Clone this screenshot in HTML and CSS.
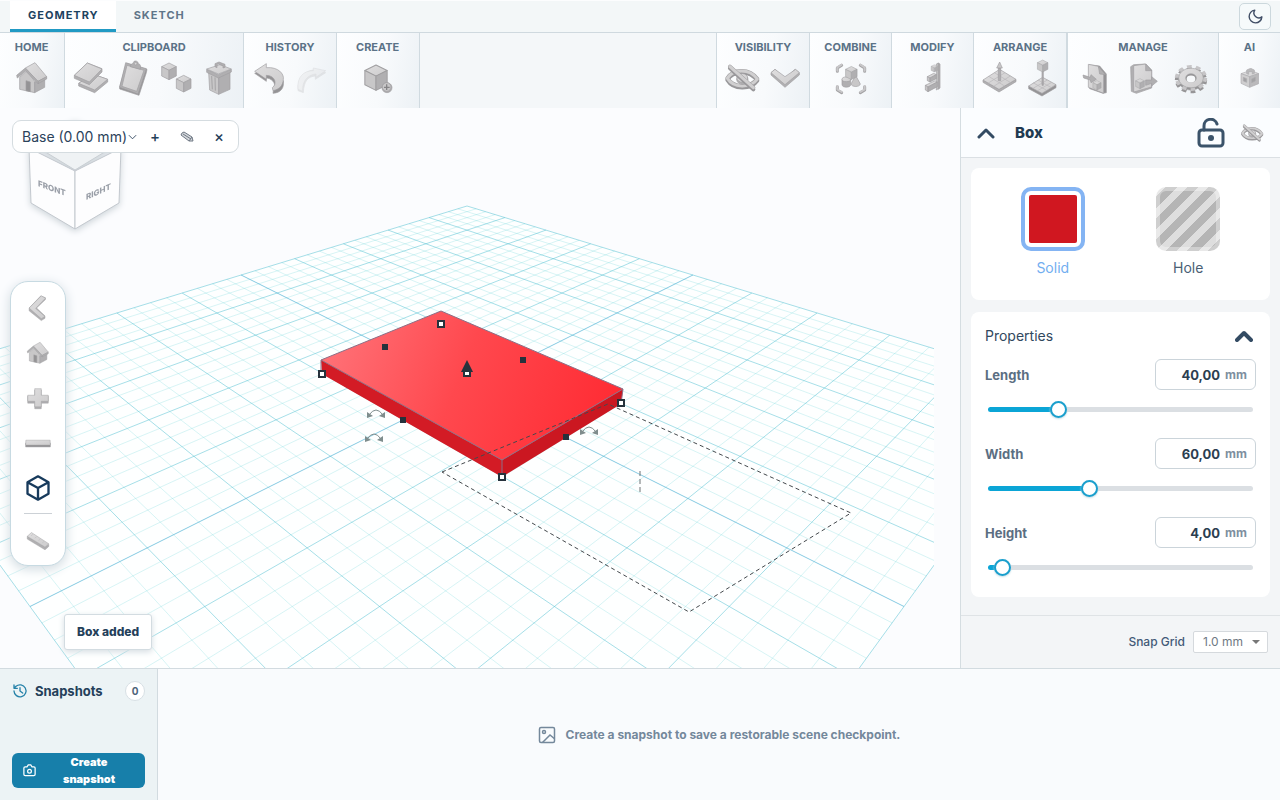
FILE: index.html
```html
<!DOCTYPE html>
<html lang="en">
<head>
<meta charset="utf-8">
<meta name="viewport" content="width=device-width, initial-scale=1">
<title>Geometry editor</title>
<link rel="stylesheet" href="styles.css">
</head>
<body>
<svg class="defs" aria-hidden="true">
  <defs>
    <linearGradient id="lit" x1="0" y1="0" x2="1" y2="1"><stop offset="0" stop-color="#dfdedf"/><stop offset="1" stop-color="#cdcccd"/></linearGradient>
    <linearGradient id="boxTop" x1="0" y1="0.4" x2="1" y2="0.6"><stop offset="0" stop-color="#ff7076"/><stop offset="0.45" stop-color="#ff484e"/><stop offset="1" stop-color="#ff2b33"/></linearGradient>
    <symbol id="cube" viewBox="-25 -28 50 56" overflow="visible">
      <path class="f1" d="M0-25 22-14 0-3-22-14Z"/><path class="f2" d="M-22-14 0-3V25L-22 14Z"/><path class="f3" d="M22-14 0-3V25L22 14Z"/>
    </symbol>
    <symbol id="house" viewBox="-60 -60 120 120">
      <path class="f2" d="M-37-2V34L8 44V10L-15-22Z"/><path class="f3" d="M8 44 38 28V0L8 12Z"/><path class="f4" d="M-18 8-5 12V41L-18 38Z"/>
      <path class="f1" d="M-20-30 9-46 44-4 18 10Z"/><path class="f3" d="M18 10 44-4V3L18 17Z"/><path class="f3" d="M-20-30-46-8-44 0-19-21 18 17V10Z"/>
    </symbol>
    <symbol id="eyeoff" viewBox="-60 -60 120 120">
      <path class="tube3" d="M-44 6C-28-22 22-26 46 8 26 36-26 36-44 6Z"/><path class="tube1" d="M-44 1C-28-27 22-31 46 3 26 31-26 31-44 1Z"/><path class="tube2" d="M-44 1C-28-27 22-31 46 3 26 31-26 31-44 1Z"/>
      <ellipse class="f3" cx="1" cy="4" rx="17" ry="15"/><ellipse class="f1" cx="1" cy="0" rx="16" ry="13"/>
      <path class="tube3" d="M-36-29 34 34"/><path class="tube1" d="M-36-34 34 29"/><path class="tube2" d="M-36-34 34 29"/>
    </symbol>
  </defs>
</svg>

<header class="tabs">
  <nav class="tablist" aria-label="Workspace">
    <button class="tab tab-active">GEOMETRY</button>
    <button class="tab">SKETCH</button>
  </nav>
  <button class="theme" aria-label="Dark mode"><svg viewBox="0 0 24 24" class="moon"><path d="M11 3a7 7 0 0 0 10 9.5A9 9 0 1 1 11 3Z"/></svg></button>
</header>

<div class="ribbon">
  <section class="group g-home"><h2>HOME</h2><div class="tools">
    <button aria-label="Home"><svg><use href="#house"/></svg></button></div></section>
  <section class="group"><h2>CLIPBOARD</h2><div class="tools">
    <button aria-label="Copy"><svg viewBox="-60 -60 120 120">
      <path class="f3" d="M8-12 53 4V12L14 44-34 24V16Z"/><path class="f1" d="M8-12 53 4 14 36-34 16Z"/>
      <path class="f3" d="M-8-45 36-28V-18L-2 20-47 1V-8Z"/><path class="f1" d="M-8-45 36-27-2 12-47-8Z"/></svg></button>
    <button aria-label="Paste"><svg viewBox="-60 -60 120 120">
      <path class="f4" d="M-20-44 42-26 40-16 18 52-40 33V26Z"/><path class="f3" d="M-22-46 40-28 15 48-40 28Z"/><path class="f1" d="M-18-38 33-23 11 40-33 25Z"/>
      <path class="f3" d="M-8-34C-8-42-2-42 1-46 2-54 16-52 16-43 22-42 24-36 22-26Z"/><circle class="f1" cx="8" cy="-43" r="4"/></svg></button>
    <button aria-label="Duplicate"><svg viewBox="-60 -60 120 120"><use href="#cube" x="-46" y="-48" width="50" height="56"/><use href="#cube" x="-2" y="-11" width="50" height="56"/></svg></button>
    <button aria-label="Delete"><svg viewBox="-60 -60 120 120">
      <path class="f2" d="M-31-16-1-4V49L-28 36Z"/><path class="f3" d="M33-18-1-4V49L33 34Z"/>
      <path class="groove" d="M-22-6-20 34M-12-2-11 38"/>
      <path class="f3" d="M-37-26-2-10 37-26V-18L-2 0-37-17Z"/><path class="f1" d="M3-40 37-27-2-12-37-27Z"/>
      <path class="f3" d="M-12-34V-43L0-48 18-41V-32L12-30V-37L-3-42-6-40V-31Z"/></svg></button></div></section>
  <section class="group"><h2>HISTORY</h2><div class="tools">
    <button aria-label="Undo"><svg viewBox="-60 -60 120 120">
      <path class="f4" d="M-43-14-8 10V0C4 0 24 14 14 30L12 46C36 44 46 30 43 8L-8-26Z"/><path class="f1" d="M-43-20-8-43V-31C28-34 46-12 43 4 42 22 32 34 12 38L10 29C26 18 18-8-8-8V4Z"/></svg></button>
    <button aria-label="Redo" disabled><svg viewBox="-60 -60 120 120">
      <path class="f3" d="M41-16 10 4V-6C-12-4-24 8-26 44L-42 38C-44 0-24-18 2-24Z"/><path class="f1" d="M41-22 4-30V-22C-24-22-46-4-42 34L-28 40C-30 6-10-10 12-12V-2Z"/></svg></button></div></section>
  <section class="group g-create"><h2>CREATE</h2><div class="tools">
    <button aria-label="Create shape"><svg viewBox="-60 -60 120 120"><use href="#cube" x="-44" y="-44" width="76" height="86"/>
      <circle class="f3" cx="27" cy="29" r="15"/><circle class="f2" cx="26" cy="27" r="13"/><path class="mark" d="M18 28H35M26 19V36"/></svg></button></div></section>
  <div class="spacer"></div>
  <section class="group g-line"><h2>VISIBILITY</h2><div class="tools">
    <button aria-label="Toggle visibility"><svg><use href="#eyeoff"/></svg></button>
    <button aria-label="More visibility"><svg viewBox="-60 -60 120 120"><path class="f3" d="M-42-16-30-26 0 2 30-26 43-16V-9L0 28-42-9Z"/><path class="f1" d="M-42-16-30-26 0-4 32-26 43-16 0 20Z"/></svg></button></div></section>
  <section class="group g-mid"><h2>COMBINE</h2><div class="tools">
    <button aria-label="Combine"><svg viewBox="-60 -60 120 120">
      <path class="bar3" d="M-41-20V-30L-28-38M41-20V-30L28-38M-41 26V36L-28 44M41 26V36L28 44"/><path class="bar1" d="M-41-22V-32L-28-40M41-22V-32L28-40M-41 24V34L-28 42M41 24V34L28 42"/>
      <path class="f3" d="M-27 4V20C-27 30-1 30-1 20V4Z"/><ellipse class="f1" cx="-14" cy="4" rx="13" ry="7"/><path class="f2" d="M14-8 28 18C26 28 2 28 0 18Z"/>
      <use href="#cube" x="-19" y="-37" width="40" height="44"/></svg></button></div></section>
  <section class="group g-mid"><h2>MODIFY</h2><div class="tools">
    <button aria-label="Align"><svg viewBox="-60 -60 120 120">
      <path class="f2" d="M10-42 16-45V32L10 36Z"/><path class="f3" d="M16-45 21-42V30L16 34Z"/>
      <use href="#cube" x="-7" y="-42" width="22" height="26"/><path class="f1" d="M-17-4 2-14 10-10-9 0Z"/><path class="f2" d="M-17-4-9 0V12L-17 8Z"/><path class="f3" d="M-9 0 10-10V2L-9 12Z"/>
      <path class="f1" d="M-23 22 6 8 13 12-15 27Z"/><path class="f2" d="M-23 22-15 27V41L-23 36Z"/><path class="f3" d="M-15 27 13 12V26L-15 41Z"/></svg></button></div></section>
  <section class="group"><h2>ARRANGE</h2><div class="tools">
    <button aria-label="Place on plane"><svg viewBox="-60 -60 120 120">
      <path class="f3" d="M-48 6 0 34 51 4V11L0 42-48 13Z"/><path class="f1" d="M2-26 51 4 0 34-48 6Z"/><path class="net" d="M-14-16 35 14M-31-5 17 24M18-16-32 15M34-6-16 25"/>
      <path class="f3" d="M-2 8V-30H5V8Z"/><path class="f2" d="M2-48 10-30H-7Z"/></svg></button>
    <button aria-label="Lift"><svg viewBox="-60 -60 120 120">
      <path class="f4" d="M-40 24 0 46 42 20V29L0 54-40 32Z"/><path class="f1" d="M2-2 42 20 0 46-40 24Z"/><path class="net" d="M-12 6 28 29M-27 14 14 37M16 6-27 31M29 13-13 38"/>
      <path class="f3" d="M0 22V-20H4V22Z"/><use href="#cube" x="-16" y="-56" width="36" height="40"/></svg></button></div></section>
  <section class="group g-manage g-line"><h2>MANAGE</h2><div class="tools">
    <button aria-label="Import"><svg viewBox="-60 -60 120 120">
      <path class="f4" d="M-18-40 14-36 34-12V44L24 46-16 32Z"/><path class="f1" d="M-20-41 10-35 26-10V46L-20 28Z"/><path class="f3" d="M10-35 14-12 32-10Z"/>
      <path class="f3" d="M-36-9-14-2-12-10 4 4-12 14-14 6-34 0Z"/><use href="#cube" x="-8" y="5" width="28" height="34"/></svg></button>
    <button aria-label="Export"><svg viewBox="-60 -60 120 120">
      <path class="f3" d="M-37-34-28-40 8-42 26-24V30L-20 46-35 40Z"/><path class="f1" d="M-28-37 8-42 26-22V27L-28 42Z"/><path class="f3" d="M8-42V-22L26-22Z"/>
      <use href="#cube" x="-24" y="0" width="30" height="34"/><path class="f3" d="M8 6 26 6V-4L43 10 26 24V16L8 22Z"/></svg></button>
    <button aria-label="Settings"><svg viewBox="-60 -60 120 120">
      <g transform="translate(0 7) scale(1 .8)"><circle class="teeth3" r="42"/><circle class="f4" r="37"/></g>
      <g transform="scale(1 .8)"><circle class="teeth1" r="42"/><circle class="f1" r="37"/><circle class="f4" r="16"/><circle class="hole" cy="4" r="13"/></g></svg></button></div></section>
  <section class="group g-ai"><h2>AI</h2><div class="tools">
    <button aria-label="Assistant"><svg viewBox="-60 -60 120 120">
      <path class="f1" d="M-27-13 2-23 26-13-1-4Z"/><path class="f2" d="M-27-13-1-4V28L-27 16Z"/><path class="f3" d="M26-13-1-4V28L26 17Z"/>
      <path class="f4" d="M-20-2-10 2V13L-20 9ZM5 3 16-2V9L5 14Z"/><path class="f3" d="M-10-13V-24L2-29 13-24V-14L7-12V-19L-4-19V-11Z"/></svg></button></div></section>
</div>

<main class="work">
  <div class="viewport">
    <svg id="scene" class="scene" viewBox="0 108 934 560" preserveAspectRatio="xMidYMid slice" role="img" aria-label="Work plane with a red box">
      <g id="grid"></g>
      <path fill="url(#boxTop)" d="M321 360 441 311 623 389 502 460Z"/>
      <path fill="#d31b25" d="M321 360 502 460V477L322 374Z"/><path fill="#cb1721" d="M502 460 623 389 621 404 502 477Z"/>
      <path class="edge" d="M321 374V360L441 311 623 389 621 404M321 360 502 460 623 389M502 460V476"/>
      <path class="ghost" d="M442 472 608 404 851 513 689 612Z"/><path class="ghost-mid" d="M640 471V493"/>
      <g class="solid"><path d="M382 344h6v6h-6zM520 357h6v6h-6zM400 417h6v6h-6zM563 434h6v6h-6z"/><path d="M467 360 473 372H461Z"/></g>
      <g class="handle"><path d="M438 321h6v6h-6zM319 371h6v6h-6zM618 400h6v6h-6zM499 474h6v6h-6zM464 371h6v5h-6z"/></g>
      <g class="spin"><path d="M369 415Q376 405 383 415M367 439Q374 429 381 439M582 432Q589 422 596 432"/></g>
      <g class="spin-tip"><path d="M367 412 373 416 367 418ZM385 412 379 416 385 418ZM365 436 371 440 365 442ZM383 436 377 440 383 442ZM580 429 586 433 580 435ZM598 429 592 433 598 435Z"/></g>
    </svg>

    <svg class="viewcube" viewBox="0 0 110 110" role="img" aria-label="View cube">
      <path class="vc-top" d="M8 22 54 0 100 22 54 50Z"/><path class="vc-side" d="M8 28 54 51V109L10 83Z"/><path class="vc-side" d="M100 28 54 51V109L98 83Z"/>
      <text transform="translate(17 66) skewY(20)">FRONT</text><text transform="translate(65 80) skewY(-24)">RIGHT</text>
    </svg>

    <div class="plane-bar">
      <div class="plane-pick"><select aria-label="Work plane"><option>Base (0.00 mm)</option></select>
      <svg viewBox="0 0 10 6"><path d="M1 1 5 5 9 1"/></svg></div>
      <button aria-label="Add plane">+</button>
      <button aria-label="Edit plane"><svg viewBox="0 0 14 12" class="pencil"><path d="M2 2 4 1 12 6 13 10 9 10 1 4Z"/><path d="M3 3 11 8M9 10 12 6"/></svg></button>
      <button aria-label="Remove plane">×</button>
    </div>

    <div class="rail">
      <button aria-label="Collapse"><svg viewBox="-60 -60 120 120"><path class="f3" d="M-38 0 12-52 32-44V-36L-6 0 30 34V44L14 54-38 12Z"/><path class="f1" d="M-38 0 14-52 32-42-10 2 30 36 14 46Z"/></svg></button>
      <button aria-label="Home view"><svg><use href="#house"/></svg></button>
      <button aria-label="Zoom in"><svg viewBox="-60 -60 120 120"><path class="f3" d="M-14-34H14V-8H44V22H14V46H-14V22H-44V-8H-14Z"/><path class="f1" d="M-14-40H14V-12H44V14H14V38H-14V14H-44V-12H-14Z"/></svg></button>
      <button aria-label="Zoom out"><svg viewBox="-60 -60 120 120"><path class="f4" d="M-53 0H53V17H-53Z"/><path class="f1" d="M-52-12H52L53 9H-53Z"/></svg></button>
      <button aria-label="Perspective"><svg viewBox="0 0 24 24" class="line-cube"><path d="M12 2 21 7V17L12 22 3 17V7ZM3 7 12 12 21 7M12 12V22"/></svg></button>
      <hr>
      <button aria-label="Measure"><svg viewBox="-60 -60 120 120"><path class="f3" d="M-46-16V-4L30 42 46 28V18L30 30Z"/><path class="f1" d="M-46-16-28-32 46 16 30 30Z"/><path class="net" d="M-30-18-22-24M-14-8-6-14M2 2 10-4M18 13 26 6"/></svg></button>
    </div>

    <div class="toast" role="status">Box added</div>
  </div>

  <aside class="panel">
    <div class="panel-head">
      <button aria-label="Collapse panel"><svg viewBox="0 0 18 12" class="chev"><path d="M2 10 9 3 16 10"/></svg></button>
      <h1>Box</h1>
      <button aria-label="Lock" class="lock"><svg viewBox="0 0 28 30"><rect x="2" y="12" width="24" height="16" rx="3"/><path d="M7 12V8C7 0 18-1 20 6"/><circle cx="14" cy="20" r="3"/></svg></button>
      <button aria-label="Hide" class="hide"><svg><use href="#eyeoff"/></svg></button>
    </div>
    <div class="panel-body">
      <div class="card kinds">
        <button class="kind kind-on"><span class="swatch solid-swatch"></span>Solid</button>
        <button class="kind"><span class="swatch hole-swatch"></span>Hole</button>
      </div>
      <div class="card props">
        <button class="props-head">Properties<svg viewBox="0 0 18 12" class="chev"><path d="M2 10 9 3 16 10"/></svg></button>
        <div class="prop">
          <label for="len">Length</label><span class="num"><input id="len" type="text" value="40,00"><span>mm</span></span>
          <input class="range" type="range" min="0" max="160" value="40" aria-label="Length slider" style="--fill:25%">
        </div>
        <div class="prop">
          <label for="wid">Width</label><span class="num"><input id="wid" type="text" value="60,00"><span>mm</span></span>
          <input class="range" type="range" min="0" max="160" value="60" aria-label="Width slider" style="--fill:37%">
        </div>
        <div class="prop">
          <label for="hei">Height</label><span class="num"><input id="hei" type="text" value="4,00"><span>mm</span></span>
          <input class="range" type="range" min="0" max="160" value="4" aria-label="Height slider" style="--fill:4%">
        </div>
      </div>
    </div>
    <div class="panel-foot">
      <label for="snap">Snap Grid</label>
      <div class="snap"><select id="snap"><option>1.0 mm</option></select><svg viewBox="0 0 8 4"><path d="M0 0H8L4 4Z"/></svg></div>
    </div>
  </aside>
</main>

<footer class="shots">
  <div class="shots-side">
    <div class="shots-head">
      <svg viewBox="0 0 24 24"><path d="M3 12a9 9 0 1 0 3-7L3 8M3 3v5h5M12 7v5l4 3"/></svg>
      <h2>Snapshots</h2><span class="count">0</span>
    </div>
    <button class="create"><svg viewBox="0 0 24 24"><path d="M3 8a2 2 0 0 1 2-2h3l2-3h4l2 3h3a2 2 0 0 1 2 2v10a2 2 0 0 1-2 2H5a2 2 0 0 1-2-2Z"/><circle cx="12" cy="13" r="3"/></svg><span>Create snapshot</span></button>
  </div>
  <p class="empty"><svg viewBox="0 0 24 24"><rect x="2" y="2" width="20" height="20" rx="2"/><circle cx="8" cy="8" r="2"/><path d="M6 22 16 12 22 17"/></svg>Create a snapshot to save a restorable scene checkpoint.</p>
</footer>
<script src="grid.js"></script>
</body>
</html>
```
FILE: styles.css
```css
* { box-sizing: border-box; }
body { margin: 0; height: 100vh; display: flex; flex-direction: column; overflow: hidden; background: #fafcfd; color: #24405a; font: 14px/20px Inter, "Liberation Sans", sans-serif; }
button { border: 0; padding: 0; margin: 0; background: none; color: inherit; font: inherit; display: flex; align-items: center; justify-content: center; }
h1, h2, p { margin: 0; }
select, input { font: inherit; color: inherit; margin: 0; }
select { appearance: none; border: 0; background: none; padding: 0; }
.defs { position: absolute; width: 0; height: 0; }

/* shaded icon faces */
.f1, .f2, .f3, .f4 { stroke: #a09fa1; stroke-width: 2; stroke-linejoin: round; }
.f1 { fill: url(#lit); }
.f2 { fill: #c8c7c8; }
.f3 { fill: #b0afb1; }
.f4 { fill: #949395; }
.groove { fill: none; stroke: #a5a4a6; stroke-width: 3; }
.net { fill: none; stroke: #b8b7b9; stroke-width: 2; }
.mark { fill: none; stroke: #858486; stroke-width: 4; }
.hole { fill: #f7f9fb; }
.tube1, .tube2, .tube3, .bar1, .bar3 { fill: none; stroke-linecap: round; stroke-linejoin: round; }
.tube3 { stroke: #98979a; stroke-width: 12; }
.tube1 { stroke: #a09fa1; stroke-width: 12; }
.tube2 { stroke: #d0cfd0; stroke-width: 9; }
.bar3 { stroke: #a3a2a4; stroke-width: 9; }
.bar1 { stroke: #c8c7c9; stroke-width: 6; }
.teeth1, .teeth3 { fill: none; stroke-width: 13; stroke-dasharray: 14 12.39; }
.teeth1 { stroke: #c6c5c7; }
.teeth3 { stroke: #969597; }

.tabs { flex: none; height: 33px; display: flex; justify-content: space-between; padding: 0 9px 0 10px; background: #f3f7f8; border-top: 1px solid #fcfdfe; border-bottom: 1px solid #cfd9df; }
.tablist { display: flex; }
.tab { padding: 0 17px 0 18px; border-bottom: 3px solid transparent; color: #5f7589; font-size: 11px; font-weight: 700; letter-spacing: 1px; }
.tab-active { background: #fff; color: #1d4260; border-bottom-color: #219ac4; }
.theme { width: 32px; height: 27px; margin-top: 2px; border: 1px solid #ccd8dd; border-radius: 5px; background: #f6fafb; }
.moon { width: 17px; height: 17px; fill: none; stroke: #414e66; stroke-width: 2; stroke-linejoin: round; }

.ribbon { flex: none; height: 75px; display: flex; background: #f4f7f9; }
.group { padding: 4px 3px 0; border-right: 1px solid #d0dae0; background: linear-gradient(100deg, #fdfeff 0%, #f8fafc 55%, #ecf1f5 100%); }
.group h2 { color: #5b7287; font-size: 11px; line-height: 20px; font-weight: 700; text-align: center; }
.tools { display: flex; justify-content: center; }
.tools button { width: 43px; height: 42px; }
.tools svg { width: 40px; height: 40px; }
.tools button:disabled { opacity: 0.25; }
.g-home { padding-left: 10px; padding-right: 11px; }
.g-create { padding-left: 19px; padding-right: 20px; }
.g-mid { width: 82px; }
.g-line { border-left: 1px solid #d0dae0; }
.g-manage .tools button { width: 48px; }
.g-ai { padding-left: 9px; padding-right: 9px; border-right: 0; }
.g-ai svg { opacity: 0.85; }
.spacer { flex: 1; }

.work { flex: 1; min-height: 0; display: flex; }
.viewport { position: relative; flex: 1; min-width: 0; display: flex; padding-right: 26px; background: #fbfcfe; }
.scene { flex: 1; min-width: 0; width: 100%; height: 100%; }
.plane-fill { fill: #feffff; }
.minor, .major, .axis { fill: none; stroke-width: 1; }
.minor { stroke: #63d3d8; stroke-opacity: 0.25; }
.major { stroke: #4fc0d2; stroke-opacity: 0.5; }
.axis { stroke: #45aed2; stroke-opacity: 0.65; }
.edge { fill: none; stroke: #8d6f86; stroke-width: 1; }
.ghost { fill: none; stroke: #44494d; stroke-width: 1; stroke-dasharray: 4 3; }
.ghost-mid { stroke: #6d7274; stroke-width: 1; stroke-dasharray: 5 3; }
.solid { fill: #26323c; }
.handle { fill: #fff; stroke: #26323c; stroke-width: 2; }
.spin { fill: none; stroke: #7f8d8d; stroke-width: 1; }
.spin-tip { fill: #7f8d8d; }

.viewcube { position: absolute; left: 21px; top: 12px; width: 110px; height: 110px; filter: drop-shadow(0 2px 3px #cdd4d9); }
.vc-top { fill: #eff2f4; stroke: #c9ced3; }
.vc-side { fill: #fdfdfe; stroke: #c3c8ce; }
.viewcube text { fill: #9a9fa8; font-size: 8px; font-weight: 800; }

.plane-bar { position: absolute; left: 12px; top: 12px; height: 33px; display: flex; align-items: center; gap: 8px; padding: 0 7px 0 9px; background: #fff; border: 1px solid #d5dce0; border-radius: 9px; }
.plane-pick { display: flex; align-items: center; }
.plane-pick select { color: #2c435b; }
.plane-pick svg { width: 9px; height: 6px; fill: none; stroke: #2c435b; }
.plane-bar button { width: 24px; height: 24px; font-size: 15px; font-weight: 500; }
.plane-bar button:first-of-type { margin-left: -2px; }
.pencil { width: 14px; height: 12px; fill: #d5d8dc; stroke: #6f7884; }

.rail { position: absolute; left: 10px; top: 173px; width: 56px; display: flex; flex-direction: column; align-items: center; padding: 3px 0; background: #fff; border: 1px solid #c7dae2; border-radius: 18px; box-shadow: 0 3px 12px #cfd9df; }
.rail button { width: 44px; height: 45px; }
.rail svg { width: 28px; height: 28px; }
.rail hr { width: 28px; margin: 3px 0; border: 0; border-top: 1px solid #ccd1d6; }
.line-cube { fill: none; stroke: #173a5c; stroke-width: 2; stroke-linejoin: round; }

.toast { position: absolute; left: 64px; bottom: 18px; padding: 7px 12px; background: #fff; border: 1px solid #d3dce1; border-radius: 3px; box-shadow: 0 2px 6px #d5dde2; font-size: 12px; font-weight: 800; }

.panel { flex: none; width: 320px; display: flex; flex-direction: column; background: #f3f5f7; border-left: 1px solid #d5dde1; }
.panel-head { height: 50px; display: flex; align-items: center; padding: 0 15px 0 16px; background: #fbfdff; border-bottom: 1px solid #dbe0e4; }
.panel-head h1 { flex: 1; margin-left: 20px; color: #1f3a52; font-size: 15px; font-weight: 800; }
.chev { width: 18px; height: 12px; fill: none; stroke: #334b63; stroke-width: 3; stroke-linecap: round; stroke-linejoin: round; }
.lock svg { width: 28px; height: 30px; fill: none; stroke: #3b536a; stroke-width: 3; stroke-linecap: round; }
.lock circle { fill: #3b536a; stroke: none; }
.hide { margin-left: 14px; }
.hide svg { width: 26px; height: 26px; }
.panel-body { flex: 1; display: flex; flex-direction: column; gap: 12px; padding: 10px 10px 0; }
.card { background: #fff; border-radius: 8px; }
.kinds { height: 132px; display: flex; padding: 19px 14px; }
.kind { flex: 1; flex-direction: column; justify-content: flex-start; gap: 7px; color: #4a5f75; }
.kind-on { color: #72aef0; }
.swatch { width: 64px; height: 64px; border-radius: 10px; border: 4px solid #84b4f3; }
.solid-swatch { padding: 4px; background: #d01720 content-box; }
.hole-swatch { border-color: rgba(255, 255, 255, 0.35); background: repeating-linear-gradient(135deg, #dedede 0 7px, #b5b5b5 7px 15px) border-box; }
.props { padding: 12px 14px; }
.props-head { width: 100%; justify-content: space-between; height: 24px; color: #31485e; }
.props-head .chev { margin-right: 3px; stroke-width: 4; }
.prop { display: grid; grid-template-columns: 1fr auto; grid-template-rows: 31px 24px; row-gap: 7px; align-items: center; align-content: start; height: 79px; padding-top: 11px; }
.prop label { color: #5b6e82; font-size: 13px; font-weight: 700; }
.num { display: flex; align-items: center; gap: 5px; width: 101px; height: 31px; padding: 0 8px; border: 1px solid #cbd4da; border-radius: 6px; font-size: 13px; font-weight: 700; }
.num input { width: 100%; min-width: 0; border: 0; padding: 0; background: none; text-align: right; color: #2b3e50; }
.num span { font-size: 12px; font-weight: 700; color: #7e8f9f; }
.range { grid-column: 1 / -1; appearance: none; height: 17px; margin: 0 3px; background: none; }
.range::-webkit-slider-runnable-track { height: 5px; border-radius: 3px; background: linear-gradient(90deg, #0ba5d6 var(--fill), #dbdfe3 var(--fill)); }
.range::-webkit-slider-thumb { appearance: none; width: 17px; height: 17px; margin-top: -6px; border: 2px solid #1a9fcd; border-radius: 50%; background: #fff; box-shadow: 0 1px 2px #c2dbe4; }
.panel-foot { height: 53px; display: flex; align-items: center; justify-content: flex-end; gap: 8px; padding: 0 12px; border-top: 1px solid #dfe3e6; color: #435a78; font-size: 12px; }
.panel-foot label { font-weight: 500; }
.snap { display: flex; align-items: center; gap: 8px; height: 22px; padding: 0 7px 0 9px; background: #fff; border: 1px solid #d5d9dd; border-radius: 2px; }
.snap select { color: #6f7983; }
.snap svg { width: 8px; height: 4px; fill: #777; }

.shots { flex: none; height: 132px; display: flex; background: #f9fbfd; border-top: 1px solid #d2dbe0; }
.shots-side { width: 158px; display: flex; flex-direction: column; justify-content: space-between; padding: 12px; background: #ecf3f5; border-right: 1px solid #d2dbe0; }
.shots-head { display: flex; align-items: center; }
.shots-head svg { width: 16px; height: 16px; fill: none; stroke: #2682a9; stroke-width: 2; stroke-linecap: round; stroke-linejoin: round; }
.shots-head h2 { flex: 1; margin-left: 7px; color: #24405a; font-size: 13px; font-weight: 700; }
.count { width: 20px; height: 20px; border: 1px solid #d8e0e5; border-radius: 10px; background: #fff; color: #4d647a; font-size: 10px; line-height: 18px; font-weight: 700; text-align: center; }
.create { height: 35px; padding: 0 10px; gap: 6px; border-radius: 6px; background: #177faa; color: #fff; font-size: 11px; line-height: 17px; font-weight: 900; }
.create svg { flex: none; width: 15px; height: 15px; fill: none; stroke: #fff; stroke-width: 2; }
.create span { flex: 1; padding: 0 16px; }
.empty { flex: 1; display: flex; align-items: center; justify-content: center; gap: 10px; color: #74889b; font-size: 12px; font-weight: 700; }
.empty svg { width: 18px; height: 18px; fill: none; stroke: #74889b; stroke-width: 2; }
```
FILE: grid.js
```js
// Draws the 200 mm work plane in perspective: 5 mm minor and 20 mm major lines.
(function () {
  var HALF = 100, FOCAL = 810, DIST = 192.3, CX = 467, CY = 388;
  var SIN = 0.5, COS = 0.866;

  function project(u, v) {
    var right = (u + v) / Math.SQRT2;
    var away = (v - u) / Math.SQRT2;
    var depth = DIST + away * COS;
    return (CX + FOCAL * right / depth).toFixed(1) + ' ' +
           (CY - FOCAL * away * SIN / depth).toFixed(1);
  }

  function addPath(cls, d) {
    var p = document.createElementNS('http://www.w3.org/2000/svg', 'path');
    p.setAttribute('class', cls);
    p.setAttribute('d', d);
    document.getElementById('grid').appendChild(p);
  }

  addPath('plane-fill', 'M' + project(-HALF, -HALF) + 'L' + project(HALF, -HALF) +
    'L' + project(HALF, HALF) + 'L' + project(-HALF, HALF) + 'Z');

  var d = { minor: '', major: '', axis: '' };
  for (var k = -HALF; k <= HALF; k += 5) {
    var kind = k === 0 ? 'axis' : k % 20 === 0 ? 'major' : 'minor';
    d[kind] += 'M' + project(k, -HALF) + 'L' + project(k, HALF) +
               'M' + project(-HALF, k) + 'L' + project(HALF, k);
  }
  addPath('minor', d.minor);
  addPath('major', d.major);
  addPath('axis', d.axis);
})();
```
